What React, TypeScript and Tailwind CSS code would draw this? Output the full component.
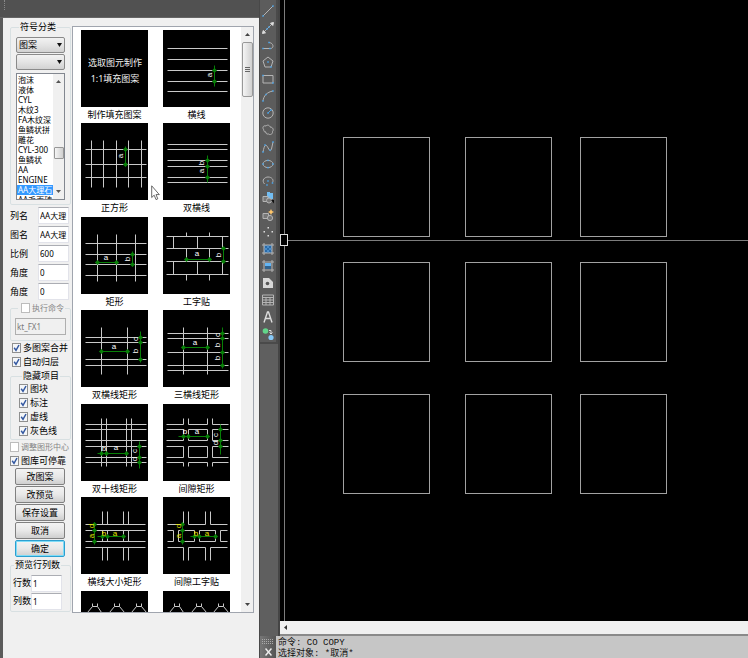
import { useState } from "react";
import type { ReactNode } from "react";
import clsx from "clsx";

type Mark = { t: string; x: number; y: number; r?: boolean };

type Pattern = {
  name?: string;
  lines: string;
  dims?: string;
  ticks?: [number, number][];
  marks?: Mark[];
  yellow?: boolean;
  caption?: string[];
};

const roof = "M6 21L11 15V12M11 15H16V12M16 15L20 21M28 21L33 15V12M33 15H38V12M38 15L43 21M50 21L55 15V12M55 15H60V12M60 15L65 21";

const patterns: Pattern[] = [
  { name: "制作填充图案", lines: "", caption: ["选取图元制作", "1:1填充图案"] },
  {
    name: "横线",
    lines: "M4 18H64M4 29H64M4 40H64M4 51H64M4 61H64",
    dims: "M51 35V56",
    ticks: [[51, 40], [51, 51]],
    marks: [{ t: "a", x: 49, y: 45, r: true }],
  },
  {
    name: "正方形",
    lines: "M4 26H65M4 41H65M4 54H65M10 17V64M22 17V64M35 17V64M47 17V64M60 17V64",
    dims: "M44 23V43",
    ticks: [[44, 26], [44, 41]],
    marks: [{ t: "a", x: 42, y: 33, r: true }],
  },
  {
    name: "双横线",
    lines: "M4 21H64M4 26H64M4 37H64M4 43H64M4 54H64M4 59H64",
    dims: "M44 32V59",
    ticks: [[44, 37], [44, 43], [44, 54]],
    marks: [{ t: "b", x: 41, y: 40, r: true }, { t: "a", x: 41, y: 48, r: true }],
  },
  {
    name: "矩形",
    lines: "M4 26H65M4 37H65M4 47H65M4 58H65M16 17V64M35 17V64M54 17V64",
    dims: "M14 45H37M51 34V49",
    ticks: [[16, 45], [35, 45], [51, 37], [51, 47]],
    marks: [{ t: "a", x: 25, y: 43 }, { t: "b", x: 49, y: 42, r: true }],
  },
  {
    name: "工字贴",
    lines: "M3 19H65M3 31H65M3 44H65M3 57H65M10 19V31M34 19V31M59 19V31M10 44V57M34 44V57M59 44V57M23 15V19M46 15V19M23 31V44M46 31V44M23 57V63M46 57V63",
    dims: "M21 42H48M60 30V46",
    ticks: [[23, 42], [46, 42], [60, 31], [60, 44]],
    marks: [{ t: "a", x: 34, y: 39 }, { t: "b", x: 58, y: 38, r: true }],
  },
  {
    name: "双横线矩形",
    lines: "M4 27H65M4 32H65M4 49H65M4 55H65M20 17V64M46 17V64",
    dims: "M18 41H48M59 21V52",
    ticks: [[20, 41], [46, 41], [59, 27], [59, 32], [59, 49]],
    marks: [{ t: "a", x: 33, y: 39 }, { t: "b", x: 57, y: 41, r: true }, { t: "c", x: 57, y: 29, r: true }],
  },
  {
    name: "三横线矩形",
    lines: "M4 23H65M4 28H65M4 42H65M4 55H65M4 60H65M20 17V64M44 17V64",
    dims: "M18 37H46M59 17V58",
    ticks: [[20, 37], [44, 37], [59, 23], [59, 28], [59, 42], [59, 55]],
    marks: [
      { t: "a", x: 32, y: 35 },
      { t: "c", x: 57, y: 25, r: true },
      { t: "b", x: 57, y: 35, r: true },
      { t: "b", x: 57, y: 48, r: true },
    ],
  },
  {
    name: "双十线矩形",
    lines: "M4 20H65M4 25H65M4 36H65M4 42H65M4 53H65M4 58H65M20 14V62M25 14V62M45 14V62M50 14V62",
    dims: "M16 49H47M58 37V64",
    ticks: [[20, 49], [25, 49], [45, 49], [58, 42], [58, 53], [58, 58]],
    marks: [
      { t: "b", x: 23, y: 47 },
      { t: "a", x: 35, y: 46 },
      { t: "c", x: 56, y: 47, r: true },
      { t: "d", x: 56, y: 55, r: true },
    ],
  },
  {
    name: "间隙矩形",
    lines: "M3 20H20V14M25 14V20H44V14M49 14V20H65M3 25H20V36H3M25 25H44V36H25ZM65 25H49V36H65M3 42H20V53H3M25 42H44V53H25ZM65 42H49V53H65M3 58H20V62M25 62V58H44V62M49 62V58H65",
    dims: "M15 32H46M57 20V50",
    ticks: [[20, 32], [25, 32], [44, 32], [57, 25], [57, 36], [57, 42]],
    marks: [
      { t: "b", x: 22, y: 30 },
      { t: "a", x: 34, y: 30 },
      { t: "c", x: 55, y: 31, r: true },
      { t: "d", x: 55, y: 39, r: true },
    ],
  },
  {
    name: "横线大小矩形",
    lines: "M4 27H64M4 33H64M4 44H64M4 50H64M21 14V27M26 14V27M42 14V27M47 14V27M21 33V44M26 33V44M42 33V44M47 33V44M21 50V63M26 50V63M42 50V63M47 50V63",
    dims: "M16 39H43M13 25V47",
    ticks: [[21, 39], [26, 39], [42, 39], [13, 27], [13, 33], [13, 44]],
    marks: [
      { t: "d", x: 13, y: 29, r: true },
      { t: "a", x: 13, y: 39, r: true },
      { t: "b", x: 23, y: 39 },
      { t: "a", x: 34, y: 39 },
    ],
    yellow: true,
  },
  {
    name: "间隙工字贴",
    lines: "M4 27H20V14M25 14V27H42V14M47 14V27H64M4 33H10V44H4M15 33H31V44H15ZM36 33H52V44H36ZM64 33H57V44H64M4 50H20V63M25 63V50H42V63M47 63V50H64",
    dims: "M27 39H54M19 25V47",
    ticks: [[31, 39], [36, 39], [52, 39], [19, 27], [19, 33], [19, 44]],
    marks: [
      { t: "d", x: 18, y: 29, r: true },
      { t: "a", x: 18, y: 39, r: true },
      { t: "b", x: 33, y: 39 },
      { t: "a", x: 44, y: 39 },
    ],
    yellow: true,
  },
  { lines: roof },
  { lines: roof },
];

const categories = ["泡沫", "液体", "CYL", "木纹3", "FA木纹深", "鱼鳞状拼", "雕花", "CYL-300", "鱼鳞状", "AA", "ENGINE", "AA大理石", "AA毛面砖"];

function Thumb({ pattern }: { pattern: Pattern }) {
  return (
    <svg viewBox="0 0 67 77" className="block h-[77px] w-[67px] bg-black" aria-hidden="true">
      <path d={pattern.lines} transform="translate(.5 .5)" fill="none" stroke="#c9c9c9" strokeWidth="1" />
      {pattern.dims ? <path d={pattern.dims} transform="translate(.5 .5)" fill="none" stroke="#078007" /> : null}
      {pattern.ticks?.map(([x, y]) => (
        <path key={`${x}-${y}`} d={`M${x - 2} ${y + 0.5}L${x + 0.5} ${y - 2}L${x + 3} ${y + 0.5}L${x + 0.5} ${y + 3}Z`} fill="#078007" />
      ))}
      {pattern.marks?.map((m, i) => (
        <text
          key={i}
          x={m.x}
          y={m.y}
          textAnchor="middle"
          transform={m.r ? `rotate(-90 ${m.x} ${m.y})` : undefined}
          fill={pattern.yellow ? "#e6e600" : "#fff"}
          className="font-['Liberation_Sans',sans-serif] text-[8px]"
        >
          {m.t}
        </text>
      ))}
      {pattern.caption?.map((line, i) => (
        <text key={line} x="34" y={36 + i * 16} textAnchor="middle" fill="#f2f2f2" className="text-[9px]">
          {line}
        </text>
      ))}
    </svg>
  );
}

function Group({ title, className, children }: { title: ReactNode; className?: string; children: ReactNode }) {
  return (
    <fieldset className={clsx("min-w-0 rounded-[2px] border border-[#d8e0e2]", className)}>
      <legend className="ml-[3px] flex h-3 items-center px-px whitespace-nowrap">{title}</legend>
      {children}
    </fieldset>
  );
}

function Check({ label, on, disabled, className }: { label: string; on?: boolean; disabled?: boolean; className?: string }) {
  return (
    <label className={clsx("flex h-3.5 items-center gap-0.5 whitespace-nowrap", disabled && "text-[8px] text-[#858585]", className)}>
      <span className="relative block h-2.5 w-[9px] shrink-0">
        <input
          type="checkbox"
          defaultChecked={on}
          disabled={disabled}
          className="peer block h-2.5 w-[9px] appearance-none border border-[#8e8f8f] bg-[#f4f6f8] disabled:border-[#bcbcbc] disabled:bg-white"
        />
        <svg viewBox="0 0 9 10" className="pointer-events-none absolute inset-0 hidden h-2.5 w-[9px] peer-checked:block">
          <path d="M2.2 4.8L4 7.4L7 2" fill="none" stroke="#3257a0" strokeWidth="1.5" />
        </svg>
      </span>
      {label}
    </label>
  );
}

function Combo({ label, options }: { label: string; options: string[] }) {
  return (
    <div className="relative">
      <select
        aria-label={label}
        className="block h-4 w-full appearance-none rounded-[2px] border border-[#8a8a8a] bg-linear-to-b from-[#f2f2f2] via-[#e4e4e4] to-[#d2d2d2] pl-0.5"
      >
        {options.map((o) => (
          <option key={o}>{o}</option>
        ))}
      </select>
      <svg viewBox="0 0 5 4" className="pointer-events-none absolute top-1.5 right-[3px] h-1 w-[5px]">
        <path d="M0 0H5L2.5 4Z" fill="#111" />
      </svg>
    </div>
  );
}

function Field({ id, label, value, narrow }: { id: string; label: string; value: string; narrow?: boolean }) {
  return (
    <div className={clsx("flex items-center", narrow ? "h-[18px] pl-0.5" : "h-[19px]")}>
      <label htmlFor={id} className={clsx("shrink-0", narrow ? "w-[18px]" : "w-7")}>
        {label}
      </label>
      <input
        id={id}
        defaultValue={value}
        className={clsx("h-[17px] min-w-0 border border-[#e2e3ea] border-t-[#abadb3] bg-white px-px text-[8px]", narrow ? "w-[31px]" : "w-[31px]")}
      />
    </div>
  );
}

const blue = "#4aa3e8";
const pale = "#b4b4b4";

function Dots({ at }: { at: [number, number][] }) {
  return (
    <>
      {at.map(([x, y]) => (
        <rect key={`${x}-${y}`} x={x - 0.75} y={y - 0.75} width="1.5" height="1.5" fill={blue} stroke="none" />
      ))}
    </>
  );
}

const tools: { name: string; icon: ReactNode }[] = [
  { name: "Line", icon: <><path d="M1 11L11 1" /><Dots at={[[1, 11], [11, 1]]} /></> },
  { name: "Construction line", icon: <><path d="M2 10L10 2" /><path d="M0.5 11.5L1.2 8.5L3.5 10.8ZM11.5 .5L8.5 1.2L10.8 3.5Z" fill="#ddd" stroke="#ddd" /><Dots at={[[5, 7], [7, 5]]} /></> },
  { name: "Polyline", icon: <><path d="M1 9.5H8.5C12 9.5 12 4 7 3.5" /><Dots at={[[1, 9.5], [7, 3.5], [8, 9.5]]} /></> },
  { name: "Polygon", icon: <><path d="M6 1L11 5L9 11H3L1 5Z" /><Dots at={[[6, 6], [9, 11]]} /></> },
  { name: "Rectangle", icon: <><path d="M1 2.5H11V10H1Z" /><Dots at={[[1, 2.5], [11, 10]]} /></> },
  { name: "Arc", icon: <><path d="M1 11C1.5 6 5 2 11 1" /><Dots at={[[1, 11], [4, 4.5], [11, 1]]} /></> },
  { name: "Circle", icon: <><circle cx="6" cy="6" r="5.2" /><path d="M6 6L9 3" stroke={blue} /><Dots at={[[6, 6], [9, 3]]} /></> },
  { name: "Revision cloud", icon: <path d="M2 6C0 4 1 1 4 2C6 0 8 2 8 3C11 3 12 6 10.5 7.5C11 10 8 11.5 6.5 10C4.5 10.5 3.5 9 4 8C2 8 1.5 7 2 6Z" /> },
  { name: "Spline", icon: <><path d="M1 11C2 6 3 3 5 5C7 8 8 12 9.5 8L11 1" /><Dots at={[[1, 11], [3, 4], [8, 9], [11, 1]]} /></> },
  { name: "Ellipse", icon: <><ellipse cx="6" cy="6" rx="5" ry="3.6" /><Dots at={[[1, 6], [11, 6], [6, 2.4], [6, 9.6]]} /></> },
  { name: "Ellipse arc", icon: <><path d="M2.5 9C-1 5 3 2 6 2C10 2 12 5 10.5 7.5" /><Dots at={[[6, 6], [5, 10], [10.5, 8]]} /></> },
  { name: "Insert block", icon: <><path d="M5 0H8V1H11V7H5Z" fill="#72bdf2" stroke="none" /><path d="M1 4.5H6V9.5H1Z" fill="#777" /><circle cx="7" cy="8.5" r="2.5" fill="#777" /><path d="M9 8H12V11.5Z" fill="#111" stroke="none" /></> },
  { name: "Make block", icon: <><path d="M1 4.5H6.5V9.5H1Z" fill="#777" /><circle cx="8" cy="9" r="2.6" fill="#777" /><path d="M9 0L10 2L12 3L10 4L9 6L8 4L6 3L8 2Z" fill="#ffc66b" stroke="none" /></> },
  { name: "Point", icon: <path d="M5.5 1H7V2.5H5.5ZM5.5 9H7V10.5H5.5ZM1.5 5H3V6.5H1.5ZM9.5 5H11V6.5H9.5Z" fill="#ddd" stroke="none" /> },
  { name: "Hatch", icon: <><path d="M2 2H10V10H2Z" fill="#2a6aa8" stroke="none" /><path d="M2 4L8 10M2 8L4 10M4 2L10 8M8 2L10 4M2 4L4 2M2 8L8 2M4 10L10 4" stroke="#5fa5df" strokeWidth=".6" /><path d="M2 0V12M10 0V12M0 2H12M0 10H12" /></> },
  { name: "Gradient", icon: <><path d="M3 3H9V6H3Z" fill="#63b5f4" stroke="none" /><path d="M3 6H9V9H3Z" fill="#32628c" stroke="none" /><path d="M2 0V12M10 0V12M0 2H12M0 10H12" /></> },
  { name: "Region", icon: <><path d="M1 1H7L11 5V11H1Z" fill="#d8d8d8" stroke="none" /><circle cx="5.5" cy="6.5" r="1.8" fill="#555" stroke="none" /></> },
  { name: "Table", icon: <path d="M.5 1H11.5V11H.5ZM.5 3.5H11.5M.5 6H11.5M.5 8.5H11.5M4 3.5V11M8 3.5V11" /> },
  { name: "Text", icon: <path d="M2 11.5L5.5 1H6.5L10 11.5M3.5 7.5H8.5" stroke="#ddd" strokeWidth="1.4" /> },
  { name: "Add selected", icon: <><circle cx="3.5" cy="3" r="2.8" fill="#62d58a" stroke="none" /><circle cx="9" cy="9.5" r="2.6" fill="#86c8f7" stroke="none" /><path d="M7 2.5H9V5.5M7.5 4.5L9 6L10.5 4.5" stroke="#ddd" /></> },
];

const squares = [137, 262, 394].flatMap((y) => [63, 185, 300].map((x) => ({ x, y })));

export default function App() {
  const [active, setActive] = useState("AA大理石");

  return (
    <div className="relative flex h-screen min-h-[640px] overflow-hidden bg-[#5f5f5f] font-['Noto_Sans','Noto_Sans_CJK_SC',sans-serif] text-[9px] leading-[10px] text-black">
      <aside className="flex w-[260px] shrink-0 flex-col border-r border-[#484848]">
        <div className="flex h-[18px] shrink-0 flex-col border-b border-[#656565] bg-[#515151]">
          <span className="ml-1 h-2.5 border-l border-dotted border-[#888]" />
        </div>
        <div className="flex min-h-0 flex-1 border-l-3 border-[#5b5b5b] bg-[#f0f0f0]">
          <form className="ml-[7px] w-[61px] shrink-0 pt-[3px]" onSubmit={(e) => e.preventDefault()}>
            <Group title="符号分类" className="px-[5px] pt-1 pb-1">
              <Combo label="符号分类" options={["图案"]} />
              <div className="mt-px">
                <Combo label="子分类" options={[""]} />
              </div>
              <div className="mt-[3px] flex h-[127px] border border-[#828790] bg-white">
                <ul role="listbox" aria-label="图案列表" className="min-w-0 flex-1 overflow-hidden pt-px text-[8px]">
                  {categories.map((c) => (
                    <li
                      key={c}
                      role="option"
                      aria-selected={c === active}
                      onClick={() => setActive(c)}
                      className={clsx("h-2.5 pl-px whitespace-nowrap", c === active && "bg-[#3399ff] text-white")}
                    >
                      {c}
                    </li>
                  ))}
                </ul>
                <div className="flex w-[11px] shrink-0 flex-col items-center bg-[#f0f0f0] py-1.5">
                  <svg viewBox="0 0 5 3" className="h-[3px] w-[5px]"><path d="M0 3H5L2.5 0Z" fill="#555" /></svg>
                  <span className="mt-16 h-3 w-2.5 rounded-[1px] border border-[#979797] bg-linear-to-r from-[#f5f5f5] to-[#cfcfcf]" />
                  <svg viewBox="0 0 5 3" className="mt-auto h-[3px] w-[5px]"><path d="M0 0H5L2.5 3Z" fill="#555" /></svg>
                </div>
              </div>
            </Group>

            <div className="mt-px">
              <Field id="column" label="列名" value="AA大理" />
              <Field id="figure" label="图名" value="AA大理" />
              <Field id="scale" label="比例" value="600" />
              <Field id="angle" label="角度" value="0" />
              <Field id="angle2" label="角度" value="0" />
            </div>

            <Group title={<Check label="执行命令" disabled className="ml-0.5" />} className="mt-px px-1 pt-1 pb-[5px]">
              <input
                aria-label="命令"
                disabled
                defaultValue="kt_FX1"
                className="block h-[17px] w-full border border-[#afafaf] bg-[#f0f0f0] px-px text-[8px] text-[#7a7a7a]"
              />
            </Group>

            <Check label="多图案合并" on className="ml-0.5" />
            <Check label="自动归层" on className="ml-0.5" />

            <Group title="隐藏项目" className="mt-px px-2 pb-px">
              <Check label="图块" on />
              <Check label="标注" on />
              <Check label="虚线" on />
              <Check label="灰色线" on />
            </Group>

            <Check label="调整图形中心" disabled />
            <Check label="图库可停靠" on />

            <div className="mr-1.5 ml-[5px] flex flex-col gap-px">
              {["改图案", "改预览", "保存设置", "取消", "确定"].map((text) => (
                <button
                  key={text}
                  type="button"
                  className={clsx(
                    "h-[17px] rounded-[2px] border bg-linear-to-b from-[#f3f3f3] via-[#e8e8e8] to-[#cfcfcf]",
                    text === "确定" ? "border-[#2c9fd0] ring-1 ring-[#7fdcf7] ring-inset" : "border-[#808080]",
                  )}
                >
                  {text}
                </button>
              ))}
            </div>

            <Group title="预览行列数" className="mt-0.5 pt-[3px] pb-px">
              <Field id="rows" label="行数" value="1" narrow />
              <Field id="cols" label="列数" value="1" narrow />
            </Group>
          </form>

          <div className="mt-2 mr-[5px] mb-[45px] ml-px flex min-w-0 flex-1 overflow-hidden border border-[#a0a5ae] bg-white">
            <div className="grid h-[657px] flex-1 grid-cols-[67px_67px] grid-rows-7 gap-x-[15px] pt-[3px] pl-2">
              {patterns.map((p, i) => (
                <figure key={i} className="flex flex-col items-center">
                  <Thumb pattern={p} />
                  {p.name ? <figcaption className="pt-[3px] whitespace-nowrap">{p.name}</figcaption> : null}
                </figure>
              ))}
            </div>
            <div className="flex w-3 shrink-0 flex-col items-center bg-[#f0f0f0] py-1.5">
              <svg viewBox="0 0 5 3" className="h-[3px] w-[5px] shrink-0"><path d="M0 3H5L2.5 0Z" fill="#444" /></svg>
              <span className="mt-1.5 flex h-[55px] w-[11px] shrink-0 flex-col items-center justify-center gap-px rounded-[2px] border border-[#989898] bg-linear-to-r from-[#f5f5f5] to-[#d0d0d0]">
                <i className="h-px w-[5px] bg-[#666]" />
                <i className="h-px w-[5px] bg-[#666]" />
                <i className="h-px w-[5px] bg-[#666]" />
              </span>
              <svg viewBox="0 0 5 3" className="mt-auto h-[3px] w-[5px] shrink-0"><path d="M0 0H5L2.5 3Z" fill="#444" /></svg>
            </div>
          </div>
        </div>
      </aside>

      <main className="flex min-w-0 flex-1 flex-col">
        <div className="flex min-h-0 flex-1">
          <nav className="w-5 shrink-0 border-r-2 border-[#454545]">
            <div className="flex h-[344px] flex-col border-r-2 border-b-2 border-[#4a4a4a] bg-[#5c5c5c] pt-0.5">
              {tools.map((tool) => (
                <button key={tool.name} type="button" title={tool.name} className="flex min-h-0 flex-1 items-center justify-center">
                  <svg viewBox="0 0 12 12" className="size-3 overflow-visible" fill="none" stroke={pale} strokeWidth="1">
                    {tool.icon}
                  </svg>
                </button>
              ))}
            </div>
          </nav>
          <div className="flex min-w-0 flex-1 flex-col">
            <svg className="min-h-0 w-full flex-1 bg-black" role="img" aria-label="Model space">
              <path d="M4.5 0V2000M4 240.5H4000" stroke="#7d7d7d" fill="none" />
              <rect x=".5" y="234.5" width="7" height="11" fill="#000" stroke="#ddd" />
              {squares.map((s) => (
                <rect key={`${s.x}-${s.y}`} x={s.x + 0.5} y={s.y + 0.5} width="86" height="99" fill="none" stroke="#a2a2a2" />
              ))}
            </svg>
            <div className="flex h-[13px] shrink-0 items-center bg-[#f0f0f0] pl-1">
              <svg viewBox="0 0 3 5" className="h-[5px] w-[3px]"><path d="M3 0V5L0 2.5Z" fill="#333" /></svg>
            </div>
            <div className="h-0.5 shrink-0 bg-[#8a8a8a]" />
          </div>
        </div>
        <div className="flex h-[22px] shrink-0 overflow-hidden bg-[#c6c6c6]">
          <div className="flex w-4 shrink-0 flex-col items-center bg-linear-to-r from-[#777] to-[#555] pt-[3px]">
            <svg viewBox="0 0 12 5" className="h-[5px] w-3">
              <path d="M0 .5H12M0 2.5H12M0 4.5H12" stroke="#aaa" strokeDasharray="1 1" />
            </svg>
            <button type="button" aria-label="Close" className="mt-1">
              <svg viewBox="0 0 7 8" className="h-2 w-[7px]"><path d="M.5 .5L6.5 7.5M6.5 .5L.5 7.5" stroke="#eee" strokeWidth="1.5" /></svg>
            </button>
          </div>
          <div className="flex-1 pt-0.5 pl-0.5 font-['Liberation_Mono','Noto_Sans_CJK_SC',monospace] leading-[11px] whitespace-nowrap text-[#111]">
            <p>命令: CO COPY</p>
            <p>选择对象: *取消*</p>
          </div>
        </div>
      </main>

      {/* Mouse pointer */}
      <svg viewBox="0 0 9 16" className="pointer-events-none absolute top-[185px] left-[151px] h-4 w-[9px]">
        <path d="M.7 .8V12.5L3.2 10.2L5 14.6L6.8 13.8L5 9.6H8.3Z" fill="#fff" stroke="#444" strokeWidth=".8" />
      </svg>
    </div>
  );
}
